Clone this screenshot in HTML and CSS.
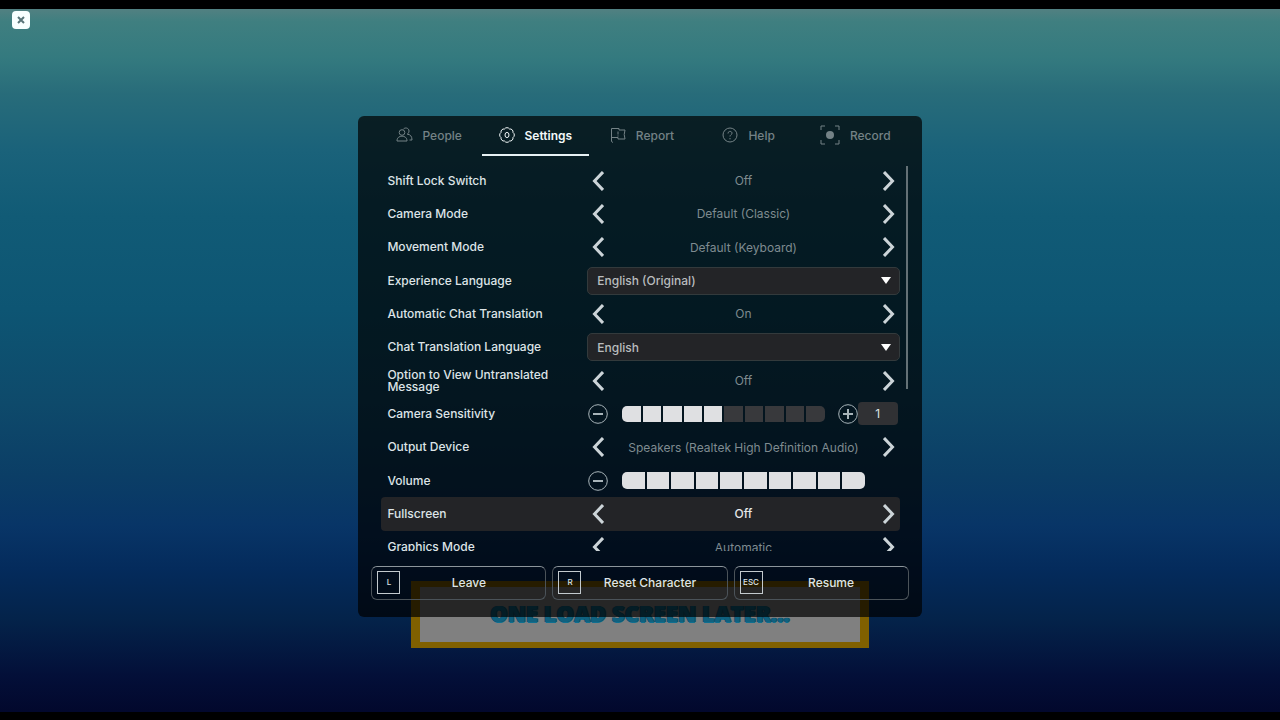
FILE: index.html
```html
<!DOCTYPE html>
<html lang="en">
<head>
    <meta charset="UTF-8">
    <meta name="viewport" content="width=device-width, initial-scale=1.0">
    <title>Settings</title>
    <link rel="stylesheet" href="styles.css">
</head>
<body>

    <!-- Shared shapes -->
    <svg class="sprite" aria-hidden="true">
        <symbol id="chevron-left" viewBox="0 0 12 20"><path d="M11 1L2.500 10l8.500 9"/></symbol>
        <symbol id="chevron-right" viewBox="0 0 12 20"><path d="M1 1l8.500 9L1 19"/></symbol>
        <symbol id="minus" viewBox="0 0 20 20"><circle cx="10" cy="10" r="9.300"/><path d="M5 10h10" class="thick"/></symbol>
        <symbol id="plus" viewBox="0 0 20 20"><circle cx="10" cy="10" r="9.300"/><path d="M5 10h10M10 5v10" class="thick"/></symbol>
        <symbol id="arrow-down" viewBox="0 0 10 7"><path d="M0 0h10L5 7z"/></symbol>
    </svg>

    <header class="top-bar">
        <button class="close" type="button" aria-label="Close">
            <svg width="8" height="8" viewBox="0 0 8 8"><path d="M1 1l6 6M7 1L1 7"/></svg>
        </button>
    </header>

    <main class="stage">
        <section class="panel">

            <!-- Tabs -->
            <nav class="tabs">
                <button class="tab" type="button">
                    <svg width="17" height="16" viewBox="0 0 17 16">
                        <circle cx="6" cy="5.500" r="2.800"/>
                        <path d="M1 14c-.3-6.500 10.300-6.500 10 0zM7.500 2c1.500-1.800 5.500-1.200 5.500 2 0 1.500-.7 2.500-1.700 3.200 3.300.3 4.700 2.300 4.700 5.800h-2.500"/>
                    </svg>
                    <span>People</span>
                </button>
                <button class="tab active" type="button">
                    <svg width="16" height="16" viewBox="0 0 16 16">
                        <path d="M5.500 2a3 3 0 0 1 5 0a3 3 0 0 1 3.500 3.500a3 3 0 0 1 0 5a3 3 0 0 1-3.500 3.500a3 3 0 0 1-5 0a3 3 0 0 1-3.500-3.500a3 3 0 0 1 0-5a3 3 0 0 1 3.500-3.500z"/>
                        <ellipse cx="8" cy="8" rx="2" ry="2.600"/>
                    </svg>
                    <span>Settings</span>
                </button>
                <button class="tab" type="button">
                    <svg width="16" height="16" viewBox="0 0 16 16">
                        <path d="M3 15.500l-1.500-1V1.500h7.500v1.500h6l-.8 4.500.8 4.500H8v-1.500H1.500M8 4.500v3M8 8.500v1"/>
                    </svg>
                    <span>Report</span>
                </button>
                <button class="tab" type="button">
                    <svg width="16" height="16" viewBox="0 0 16 16">
                        <circle cx="8" cy="8" r="7"/>
                        <path d="M6 6.500c0-3 4.200-2.600 4-.2C9.900 7.800 8 7.700 8 9.500M8 11v1.300"/>
                    </svg>
                    <span>Help</span>
                </button>
                <button class="tab" type="button">
                    <svg width="20" height="20" viewBox="0 0 20 20">
                        <path d="M1 5V1h4M15 1h4v4M19 15v4h-4M5 19H1v-4"/>
                        <circle cx="10" cy="10" r="4" class="dot"/>
                    </svg>
                    <span>Record</span>
                </button>
            </nav>

            <!-- Settings list -->
            <div class="content">
                <div class="viewport">
                    <div class="rows">
                        <div class="row" role="group" aria-labelledby="shift-lock">
                            <span class="name" id="shift-lock">Shift Lock Switch</span>
                            <div class="selector">
                                <button type="button" aria-label="Previous"><svg><use href="#chevron-left"/></svg></button>
                                <span>Off</span>
                                <button type="button" aria-label="Next"><svg><use href="#chevron-right"/></svg></button>
                            </div>
                        </div>
                        <div class="row" role="group" aria-labelledby="camera-mode">
                            <span class="name" id="camera-mode">Camera Mode</span>
                            <div class="selector">
                                <button type="button" aria-label="Previous"><svg><use href="#chevron-left"/></svg></button>
                                <span>Default (Classic)</span>
                                <button type="button" aria-label="Next"><svg><use href="#chevron-right"/></svg></button>
                            </div>
                        </div>
                        <div class="row" role="group" aria-labelledby="movement-mode">
                            <span class="name" id="movement-mode">Movement Mode</span>
                            <div class="selector">
                                <button type="button" aria-label="Previous"><svg><use href="#chevron-left"/></svg></button>
                                <span>Default (Keyboard)</span>
                                <button type="button" aria-label="Next"><svg><use href="#chevron-right"/></svg></button>
                            </div>
                        </div>
                        <div class="row">
                            <label class="name" for="experience-language">Experience Language</label>
                            <div class="dropdown">
                                <select id="experience-language"><option>English (Original)</option></select>
                                <svg><use href="#arrow-down"/></svg>
                            </div>
                        </div>
                        <div class="row" role="group" aria-labelledby="auto-translation">
                            <span class="name" id="auto-translation">Automatic Chat Translation</span>
                            <div class="selector">
                                <button type="button" aria-label="Previous"><svg><use href="#chevron-left"/></svg></button>
                                <span>On</span>
                                <button type="button" aria-label="Next"><svg><use href="#chevron-right"/></svg></button>
                            </div>
                        </div>
                        <div class="row">
                            <label class="name" for="chat-language">Chat Translation Language</label>
                            <div class="dropdown">
                                <select id="chat-language"><option>English</option></select>
                                <svg><use href="#arrow-down"/></svg>
                            </div>
                        </div>
                        <div class="row" role="group" aria-labelledby="untranslated">
                            <span class="name" id="untranslated">Option to View Untranslated Message</span>
                            <div class="selector">
                                <button type="button" aria-label="Previous"><svg><use href="#chevron-left"/></svg></button>
                                <span>Off</span>
                                <button type="button" aria-label="Next"><svg><use href="#chevron-right"/></svg></button>
                            </div>
                        </div>
                        <div class="row">
                            <label class="name" for="sensitivity">Camera Sensitivity</label>
                            <div class="stepper">
                                <button type="button" aria-label="Decrease"><svg><use href="#minus"/></svg></button>
                                <div class="segments">
                                    <i class="on"></i><i class="on"></i><i class="on"></i><i class="on"></i><i class="on"></i>
                                    <i></i><i></i><i></i><i></i><i></i>
                                </div>
                                <button type="button" aria-label="Increase"><svg><use href="#plus"/></svg></button>
                                <input class="value" id="sensitivity" type="text" value="1">
                            </div>
                        </div>
                        <div class="row" role="group" aria-labelledby="output-device">
                            <span class="name" id="output-device">Output Device</span>
                            <div class="selector">
                                <button type="button" aria-label="Previous"><svg><use href="#chevron-left"/></svg></button>
                                <span>Speakers (Realtek High Definition Audio)</span>
                                <button type="button" aria-label="Next"><svg><use href="#chevron-right"/></svg></button>
                            </div>
                        </div>
                        <div class="row" role="group" aria-labelledby="volume">
                            <span class="name" id="volume">Volume</span>
                            <div class="stepper volume">
                                <button type="button" aria-label="Decrease"><svg><use href="#minus"/></svg></button>
                                <div class="segments">
                                    <i class="on"></i><i class="on"></i><i class="on"></i><i class="on"></i><i class="on"></i>
                                    <i class="on"></i><i class="on"></i><i class="on"></i><i class="on"></i><i class="on"></i>
                                </div>
                            </div>
                        </div>
                        <div class="row selected" role="group" aria-labelledby="fullscreen">
                            <span class="name" id="fullscreen">Fullscreen</span>
                            <div class="selector">
                                <button type="button" aria-label="Previous"><svg><use href="#chevron-left"/></svg></button>
                                <span>Off</span>
                                <button type="button" aria-label="Next"><svg><use href="#chevron-right"/></svg></button>
                            </div>
                        </div>
                        <div class="row" role="group" aria-labelledby="graphics-mode">
                            <span class="name" id="graphics-mode">Graphics Mode</span>
                            <div class="selector">
                                <button type="button" aria-label="Previous"><svg><use href="#chevron-left"/></svg></button>
                                <span>Automatic</span>
                                <button type="button" aria-label="Next"><svg><use href="#chevron-right"/></svg></button>
                            </div>
                        </div>
                    </div>
                </div>
                <div class="scrollbar"></div>
            </div>

            <!-- Bottom buttons -->
            <footer class="actions">
                <button type="button"><kbd>L</kbd><span>Leave</span></button>
                <button type="button"><kbd>R</kbd><span>Reset Character</span></button>
                <button type="button"><kbd>ESC</kbd><span>Resume</span></button>
            </footer>
        </section>

        <!-- Caption behind the panel -->
        <div class="caption">ONE LOAD SCREEN LATER...</div>
    </main>
</body>
</html>
```
FILE: styles.css
```css
* {
    box-sizing: border-box;
}

body {
    margin: 0;
    min-height: 100vh;
    display: flex;
    flex-direction: column;
    border-top: 9px solid #000;
    border-bottom: 8px solid #000;
    background: linear-gradient(#5f8182 0%, #3f7f80 3%, #347a7f 8%, #286c7a 13%, #1a627a 21%, #115b76 30%, #0d5573 43%, #0e4a6b 56%, #0b3e66 66%, #083567 73%, #042b5c 79%, #04234a 86%, #030f38 94%, #02062a 100%);
    color: #dde4e7;
    font-family: Inter, "Liberation Sans", sans-serif;
    font-size: 12px;
    font-weight: 500;
}

button, input, select {
    margin: 0;
    padding: 0;
    border: 0;
    background: none;
    color: inherit;
    font: inherit;
}

svg {
    display: block;
    fill: none;
    stroke: currentColor;
}

.sprite {
    position: absolute;
    width: 0;
    height: 0;
}

.top-bar {
    padding: 2px 12px 0;
}

.close {
    display: grid;
    place-items: center;
    width: 18px;
    height: 18px;
    border-radius: 4px;
    background: #f8ffff;
    color: #587478;
}

.close svg {
    stroke-width: 2;
}

.stage {
    flex: 1;
    display: flex;
    flex-direction: column;
    align-items: center;
    justify-content: center;
    padding-top: 23px;
}

.panel {
    position: relative;
    z-index: 1;
    width: 44%;
    min-width: 540px;
    border-radius: 6px;
    background: rgba(0, 0, 0, 0.7);
}

/* Tabs */
.tabs {
    display: grid;
    grid-template-columns: repeat(5, 1fr);
    height: 40px;
    padding: 0 13px 0 17px;
}

.tab {
    display: flex;
    align-items: center;
    justify-content: center;
    gap: 10px;
    border-bottom: 2px solid transparent;
    color: #748286;
}

.tab.active {
    border-color: #e6f1f3;
    color: #f2f8f9;
    font-weight: 600;
}

.dot {
    fill: currentColor;
    stroke: none;
}

/* List */
.content {
    display: flex;
    gap: 6px;
    padding: 8px 14px 0 23px;
}

.viewport {
    flex: 1;
    max-height: 387px;
    overflow: hidden;
}

.rows {
    display: grid;
    grid-template-rows: repeat(12, 1fr);
    height: 400px;
}

.row {
    display: grid;
    grid-template-columns: 16fr 25fr;
    align-items: center;
    padding-left: 6px;
    border-radius: 4px;
}

.row.selected {
    background: #232427;
}

.name {
    padding-right: 30px;
    line-height: 12px;
}

.selector {
    display: flex;
    align-items: center;
    justify-content: space-between;
    padding: 0 5px;
    color: #7f8b90;
    font-weight: 400;
}

.selector svg {
    width: 12px;
    height: 20px;
    color: #ccd4d8;
    stroke-width: 3;
}

.selected .selector {
    color: #e6e8e9;
    font-weight: 500;
}

.dropdown {
    display: grid;
    align-items: center;
}

.dropdown select {
    grid-area: 1 / 1;
    height: 28px;
    padding: 0 9px;
    appearance: none;
    border: 1px solid #333a3c;
    border-radius: 5px;
    background: #232427;
    color: #b9bcbe;
}

.dropdown svg {
    grid-area: 1 / 1;
    justify-self: end;
    width: 10px;
    height: 7px;
    margin-right: 9px;
    fill: #fff;
    stroke: none;
    pointer-events: none;
}

.stepper {
    display: flex;
    align-items: center;
    padding: 0 2px 0 1px;
}

.stepper svg {
    width: 20px;
    height: 20px;
    color: #a8b4b9;
}

.thick {
    stroke-width: 2;
}

.segments {
    flex: 1;
    display: grid;
    grid-template-columns: repeat(10, 1fr);
    gap: 2px;
    height: 16px;
    margin: 0 13px 0 14px;
    overflow: hidden;
    border-radius: 5px;
}

.segments i {
    background: #38393c;
}

.segments .on {
    background: #dfe0e2;
}

.volume {
    padding-right: 22px;
}

.volume .segments {
    height: 17px;
}

.value {
    width: 40px;
    height: 23px;
    border-radius: 4px;
    background: #303134;
    text-align: center;
    font-weight: 400;
}

.scrollbar {
    width: 2px;
    height: 223px;
    margin-top: 2px;
    background: #647176;
}

/* Bottom buttons */
.actions {
    display: grid;
    grid-template-columns: repeat(3, 1fr);
    gap: 6px;
    padding: 15px 13px 17px;
}

.actions button {
    display: flex;
    align-items: center;
    height: 34px;
    padding: 0 8px 2px 5px;
    border: 1px solid #4b5359;
    border-top-color: #8c959b;
    border-radius: 6px;
}

.actions kbd {
    display: grid;
    place-items: center;
    width: 23px;
    height: 23px;
    border: 1px solid #c3cace;
    font-family: inherit;
    font-size: 8px;
}

.actions span {
    flex: 1;
}

.caption {
    width: 458px;
    height: 67px;
    margin-top: -36px;
    border: solid #806000;
    border-width: 6px 9px;
    background: #808080;
    color: #10617f;
    font-family: "Open Sans", sans-serif;
    font-size: 22px;
    font-weight: 800;
    line-height: 52px;
    text-align: center;
    text-shadow: 1px 0 #0f4f68, -1px 0 #0f4f68, 0 1px #0f6f90;
}
```
